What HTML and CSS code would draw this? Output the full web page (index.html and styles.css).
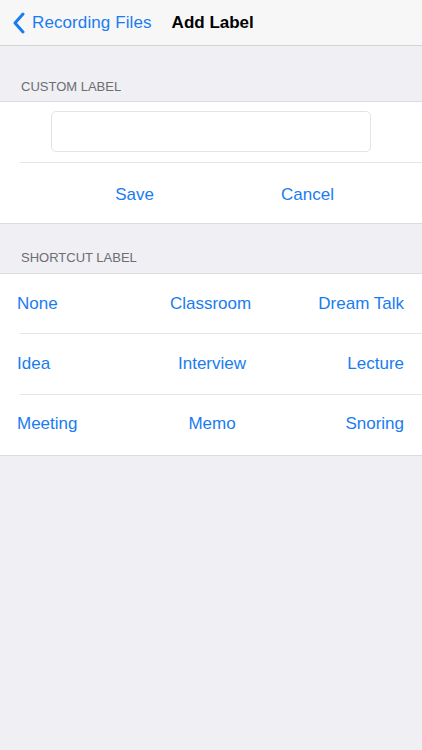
FILE: index.html
```html
<!DOCTYPE html>
<html>
<head>
<meta charset="utf-8">
<link rel="stylesheet" href="styles.css">
</head>
<body>
<div class="nav">
  <div class="back">
    <svg class="chev" width="13" height="22" viewBox="0 0 13 22"><path d="M11 2 L3 11 L11 20" fill="none" stroke="#1a7cf0" stroke-width="3" stroke-linecap="round" stroke-linejoin="round"/></svg>
    <span class="back-text">Recording Files</span>
  </div>
  <div class="title">Add Label</div>
</div>
<div class="header h1">CUSTOM LABEL</div>
<div class="group">
  <div class="field-row"><div class="field"></div></div>
  <div class="buttons">
    <div class="btn">Save</div>
    <div class="btn">Cancel</div>
  </div>
</div>
<div class="header h2">SHORTCUT LABEL</div>
<div class="group">
  <div class="row"><span class="l">None</span><span class="c">Classroom</span><span class="r">Dream Talk</span></div>
  <div class="row"><span class="l">Idea</span><span class="c">Interview</span><span class="r">Lecture</span></div>
  <div class="row"><span class="l">Meeting</span><span class="c">Memo</span><span class="r">Snoring</span></div>
</div>
</body>
</html>
```
FILE: styles.css
```css
html, body {
  margin: 0;
  padding: 0;
  background: #efeff4;
  font-family: "Liberation Sans", Arial, sans-serif;
  height: 100%;
}
.nav {
  height: 45px;
  background: #f7f7f8;
  border-bottom: 1px solid #d3d3d6;
  display: flex;
  align-items: center;
  padding-left: 12px;
}
.back {
  display: flex;
  align-items: center;
  color: #1a7cf0;
  font-size: 17px;
}
.chev {
  margin-right: 7px;
  margin-top: 1px;
}
.back-text {
  margin-right: 20px;
  letter-spacing: 0.1px;
}
.title {
  font-size: 17px;
  font-weight: bold;
  color: #000;
}
.header {
  display: flex;
  align-items: flex-end;
  padding-left: 21px;
  font-size: 13px;
  line-height: 16px;
  color: #6d6d72;
  box-sizing: border-box;
}
.h1 { height: 55px; padding-bottom: 6px; }
.h2 { height: 49px; padding-bottom: 7px; }
.group {
  background: #fff;
  border-top: 1px solid #dcdce0;
  border-bottom: 1px solid #dcdce0;
}
.field-row {
  margin-left: 20px;
  padding: 9px 0 10px 0;
  border-bottom: 1px solid #e6e6e8;
}
.field {
  margin-left: 31px;
  width: 318px;
  height: 39px;
  border: 1px solid #e4e4e6;
  border-radius: 5px;
}
.buttons {
  display: flex;
  height: 60px;
  padding-left: 48px;
  padding-top: 3px;
  box-sizing: border-box;
  align-items: center;
}
.btn {
  width: 173px;
  text-align: center;
  font-size: 17px;
  color: #1a7cf0;
}
.row {
  display: grid;
  grid-template-columns: 1fr 1fr 1fr;
  align-items: center;
  height: 60px;
  padding: 0 18px 0 17px;
  font-size: 17px;
  color: #1a7cf0;
}
.row:first-child { height: 59px; }
.row:last-child { height: 61px; padding-bottom: 2px; box-sizing: border-box; }
.row + .row {
  border-top: 1px solid #e6e6e8;
  margin-left: 20px;
  padding-left: 0;
}
.row + .row .l { margin-left: -3px; }
.row .c { text-align: center; }
.row .r { text-align: right; }
```
